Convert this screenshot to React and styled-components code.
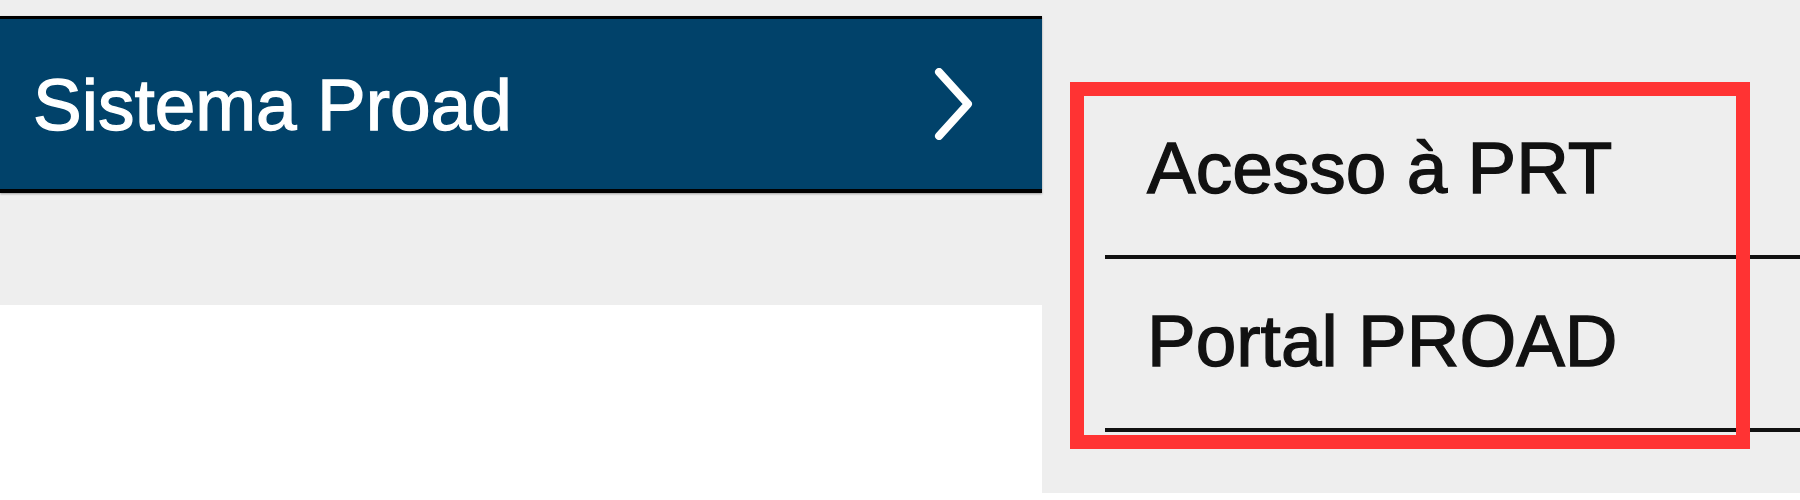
import styled, { createGlobalStyle } from "styled-components";

const GlobalStyle = createGlobalStyle`
  body {
    margin: 0;
    background: #ffffff;
    font-family: "Liberation Sans", Arial, sans-serif;
  }
`;

const Page = styled.div`
  position: relative;
  display: flex;
  height: 493px;
  background: #eeeeee;
  overflow: hidden;
`;

const LeftColumn = styled.div`
  width: 1042px;
  display: flex;
  flex-direction: column;
  padding-top: 16px;
  box-sizing: border-box;
`;

const MenuBar = styled.div`
  height: 177px;
  box-sizing: border-box;
  display: flex;
  align-items: center;
  justify-content: space-between;
  padding: 0 67px 0 33px;
  background: #01426a;
  border-top: 3px solid #000;
  border-bottom: 4px solid #000;
  box-shadow: 0 1px 2px rgba(0, 0, 0, 0.35);
  color: #ffffff;
  font-size: 73px;
  -webkit-text-stroke: 1.3px currentColor;
`;

const Spacer = styled.div`
  height: 112px;
`;

const WhiteArea = styled.div`
  flex: 1;
  background: #ffffff;
`;

const SubMenu = styled.ul`
  flex: 1;
  list-style: none;
  margin: 0;
  padding: 86px 0 0 63px;
`;

const SubItem = styled.li`
  height: 173px;
  display: flex;
  align-items: center;
  padding-left: 42px;
  padding-bottom: 6px;
  box-sizing: border-box;
  border-bottom: 4px solid #111;
  color: #111;
  font-size: 73px;
  -webkit-text-stroke: 1.3px currentColor;
`;

const Highlight = styled.div`
  position: absolute;
  left: 1070px;
  top: 82px;
  width: 680px;
  height: 367px;
  box-sizing: border-box;
  border: 14px solid #ff3333;
  pointer-events: none;
`;

const Chevron = () => (
  <svg width="42" height="72" viewBox="0 0 42 72" fill="none">
    <path
      d="M6 4 L35 36 L6 68"
      stroke="#ffffff"
      strokeWidth="8"
      strokeLinecap="round"
      strokeLinejoin="round"
    />
  </svg>
);

export default function App() {
  const items = ["Acesso à PRT", "Portal PROAD"];
  return (
    <>
      <GlobalStyle />
      <Page>
        <LeftColumn>
          <MenuBar>
            <span>Sistema Proad</span>
            <Chevron />
          </MenuBar>
          <Spacer />
          <WhiteArea />
        </LeftColumn>
        <SubMenu>
          {items.map((item) => (
            <SubItem key={item}>{item}</SubItem>
          ))}
        </SubMenu>
        <Highlight />
      </Page>
    </>
  );
}
